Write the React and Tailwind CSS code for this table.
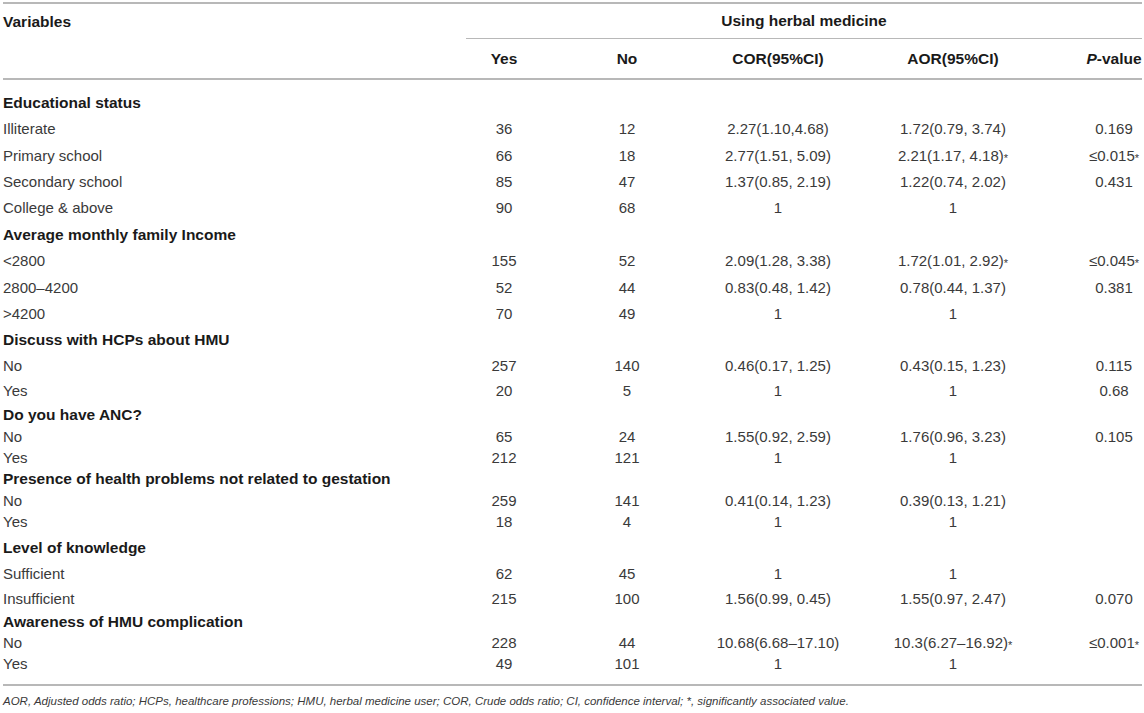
const cols = 'grid grid-cols-[463px_76px_170px_132px_218px_80px] items-center';

const rows = [
  { h: 'h-[27px]', head: 'Educational status' },
  { h: 'h-[27px]', cells: ['Illiterate', '36', '12', '2.27(1.10,4.68)', '1.72(0.79, 3.74)', '0.169'] },
  { h: 'h-[26px]', cells: ['Primary school', '66', '18', '2.77(1.51, 5.09)', ['2.21(1.17, 4.18)', true], ['\u22640.015', true]] },
  { h: 'h-[26px]', cells: ['Secondary school', '85', '47', '1.37(0.85, 2.19)', '1.22(0.74, 2.02)', '0.431'] },
  { h: 'h-[26px]', cells: ['College & above', '90', '68', '1', '1', ''] },
  { h: 'h-[27px]', head: 'Average monthly family Income' },
  { h: 'h-[27px]', cells: ['<2800', '155', '52', '2.09(1.28, 3.38)', ['1.72(1.01, 2.92)', true], ['\u22640.045', true]] },
  { h: 'h-[26px]', cells: ['2800\u20134200', '52', '44', '0.83(0.48, 1.42)', '0.78(0.44, 1.37)', '0.381'] },
  { h: 'h-[26px]', cells: ['>4200', '70', '49', '1', '1', ''] },
  { h: 'h-[26px]', head: 'Discuss with HCPs about HMU' },
  { h: 'h-[26px]', cells: ['No', '257', '140', '0.46(0.17, 1.25)', '0.43(0.15, 1.23)', '0.115'] },
  { h: 'h-[25px]', cells: ['Yes', '20', '5', '1', '1', '0.68'] },
  { h: 'h-[22px]', head: 'Do you have ANC?' },
  { h: 'h-[21px]', cells: ['No', '65', '24', '1.55(0.92, 2.59)', '1.76(0.96, 3.23)', '0.105'] },
  { h: 'h-[21px]', cells: ['Yes', '212', '121', '1', '1', ''] },
  { h: 'h-[22px]', head: 'Presence of health problems not related to gestation' },
  { h: 'h-[21px]', cells: ['No', '259', '141', '0.41(0.14, 1.23)', '0.39(0.13, 1.21)', ''] },
  { h: 'h-[23px]', cells: ['Yes', '18', '4', '1', '1', ''] },
  { h: 'h-[27px]', head: 'Level of knowledge' },
  { h: 'h-[26px]', cells: ['Sufficient', '62', '45', '1', '1', ''] },
  { h: 'h-[24px]', cells: ['Insufficient', '215', '100', '1.56(0.99, 0.45)', '1.55(0.97, 2.47)', '0.070'] },
  { h: 'h-[21px]', head: 'Awareness of HMU complication' },
  { h: 'h-[21px]', cells: ['No', '228', '44', '10.68(6.68\u201317.10)', ['10.3(6.27\u201316.92)', true], ['\u22640.001', true]] },
  { h: 'h-[21px]', cells: ['Yes', '49', '101', '1', '1', ''] },
];

function Cell({ value, className }) {
  if (Array.isArray(value)) {
    return (
      <div className={className}>
        {value[0]}
        <sup className="text-[11px] relative top-[1px]">*</sup>
      </div>
    );
  }
  return <div className={className}>{value}</div>;
}

export default function App() {
  return (
    <div className="bg-white w-[1144px] h-[713px] overflow-hidden pt-[2px] font-['Liberation_Sans',Arial,sans-serif]">
      <div className="ml-[3px] w-[1139px] border-t-2 border-b-2 border-[#b8b8b8]">
        {/* header */}
        <div className="grid grid-cols-[463px_676px] h-[35px]">
          <div className="flex items-center font-bold text-[15.5px] text-[#1a1a1a]">Variables</div>
          <div className="flex items-center justify-center font-bold text-[15.5px] text-[#1a1a1a] border-b border-[#b8b8b8]">
            Using herbal medicine
          </div>
        </div>
        <div className={`${cols} h-[41px] border-b-2 border-[#b8b8b8] font-bold text-[15.5px] text-[#1a1a1a]`}>
          <div></div>
          <div className="text-center">Yes</div>
          <div className="text-center">No</div>
          <div className="text-center">COR(95%CI)</div>
          <div className="text-center">AOR(95%CI)</div>
          <div className="text-center pl-[24px]">
            <span className="italic">P</span>-value
          </div>
        </div>

        {/* body */}
        <div className="pt-[9px] pb-[10px]">
          {rows.map((r, i) =>
            r.head ? (
              <div key={i} className={`${r.h} flex items-center font-bold text-[15.5px] text-[#1a1a1a]`}>
                {r.head}
              </div>
            ) : (
              <div key={i} className={`${cols} ${r.h} text-[15px] text-[#3a3a3a]`}>
                <Cell value={r.cells[0]} className="" />
                <Cell value={r.cells[1]} className="text-center" />
                <Cell value={r.cells[2]} className="text-center" />
                <Cell value={r.cells[3]} className="text-center" />
                <Cell value={r.cells[4]} className="text-center" />
                <Cell value={r.cells[5]} className="text-center pl-[24px]" />
              </div>
            )
          )}
        </div>
      </div>
      <p className="ml-[3px] mt-[7px] italic text-[11.5px] text-[#3a3a3a]">
        AOR, Adjusted odds ratio; HCPs, healthcare professions; HMU, herbal medicine user; COR, Crude odds ratio; CI, confidence interval; *, significantly associated value.
      </p>
    </div>
  );
}
